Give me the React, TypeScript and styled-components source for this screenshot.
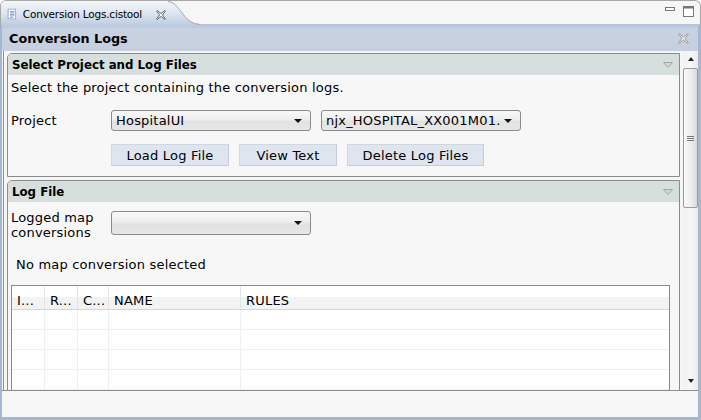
import styled, { createGlobalStyle } from 'styled-components';

const GlobalStyle = createGlobalStyle`
  html, body {
    margin: 0;
    padding: 0;
    background: #ffffff;
  }
  body {
    font-family: "DejaVu Sans", Verdana, sans-serif;
    font-size: 13px;
    letter-spacing: 0.2px;
    color: #000000;
  }
`;

const Window = styled.div`
  width: 701px;
  height: 420px;
  display: flex;
  flex-direction: column;
  overflow: hidden;
  background: #ffffff;
`;

// Editor tab strip
const TabBar = styled.div`
  height: 26px;
  flex: none;
  display: flex;
  align-items: stretch;
  box-sizing: border-box;
  border: 1px solid #a7a7a7;
  border-bottom: none;
  border-radius: 6px 6px 0 0;
  background: #f6f6f6;
  overflow: hidden;
  box-shadow: inset 0 -2px 0 #b5c5da;
`;

const Tab = styled.div`
  width: 165px;
  display: flex;
  align-items: center;
  gap: 6px;
  padding-left: 6px;
  box-sizing: border-box;
  background: linear-gradient(to bottom, #f3f6fa 0%, #dfe7f1 45%, #bccbdf 100%);
`;

const TabLabel = styled.span`
  font-size: 10.5px;
  letter-spacing: -0.2px;
  color: #000;
  white-space: nowrap;
  padding-top: 1px;
`;

const TabClose = styled.span`
  display: flex;
  margin-left: 8px;
  padding-top: 2px;
`;

const TabCurve = styled.svg`
  flex: none;
  display: block;
`;

const ViewControls = styled.div`
  margin-left: auto;
  display: flex;
  align-items: flex-start;
  gap: 8px;
  padding: 5px 6px 0 0;
`;

// View frame below the tabs
const ViewFrame = styled.div`
  flex: 1;
  display: flex;
  flex-direction: column;
  border: 3px solid #a4b7cf;
  border-top: none;
  border-left-width: 2px;
  min-height: 0;
`;

const ViewHeader = styled.div`
  height: 25px;
  flex: none;
  display: flex;
  align-items: center;
  justify-content: space-between;
  box-sizing: border-box;
  padding: 0 9px 0 7px;
  background: linear-gradient(to bottom, #b9c8dc 0, #c9d2e1 3px, #c6cfdf 100%);
  font-size: 12.8px;
  letter-spacing: 0;
  font-weight: bold;
`;

const Body = styled.div`
  height: 340px;
  flex: none;
  display: flex;
  border-bottom: 1px solid #8e8e8e;
  box-sizing: border-box;
  background: #f6f6f6;
`;

const ScrollArea = styled.div`
  flex: 1;
  margin-left: 1px;
  border-left: 1px solid #8e8e8e;
  overflow: hidden;
  padding: 2px 3px 0 3px;
  display: flex;
  flex-direction: column;
  gap: 3px;
`;

const Section = styled.div`
  border: 1px solid #8a8a8a;
  border-radius: 5px 0 0 0;
  background: #f7f7f7;
  flex: none;
`;

const SectionHeader = styled.div`
  height: 21px;
  display: flex;
  align-items: center;
  justify-content: space-between;
  padding: 0 6px 0 4px;
  background: #d7dfde;
  border-radius: 4px 0 0 0;
  font-weight: bold;
  font-size: 11.8px;
  letter-spacing: 0;
`;

const SectionBody = styled.div<{ $pad: string }>`
  padding: ${(p) => p.$pad};
  display: flex;
  flex-direction: column;
`;

const Description = styled.div`
  line-height: 14px;
  height: 14px;
  margin-bottom: 15px;
`;

const FieldRow = styled.div<{ $mb: number; $top?: boolean }>`
  display: grid;
  grid-template-columns: 100px auto;
  align-items: ${(p) => (p.$top ? 'start' : 'center')};
  margin-bottom: ${(p) => p.$mb}px;
`;

const FieldLabel = styled.div`
  line-height: 15px;
`;

const Controls = styled.div<{ $gap: number }>`
  display: flex;
  gap: ${(p) => p.$gap}px;
  align-items: center;
`;

const Combo = styled.div<{ $h: number }>`
  width: 200px;
  height: ${(p) => p.$h}px;
  box-sizing: border-box;
  border: 1px solid #8a8a8a;
  border-radius: 3px;
  background: linear-gradient(to bottom, #f8f8f8 0%, #eeeeee 45%, #e2e2e2 55%, #e6e6e6 100%);
  display: flex;
  align-items: center;
  padding: 0 8px 0 4px;
  gap: 4px;
`;

const ComboText = styled.span`
  flex: 1;
  overflow: hidden;
  white-space: nowrap;
`;

const ComboArrow = styled.span`
  width: 0;
  height: 0;
  border-left: 4px solid transparent;
  border-right: 4px solid transparent;
  border-top: 4px solid #111;
  flex: none;
`;

const Button = styled.div<{ $w: number }>`
  width: ${(p) => p.$w}px;
  height: 22px;
  box-sizing: border-box;
  display: flex;
  align-items: center;
  justify-content: center;
  background: #dee5ef;
  border: 1px solid #cfd7e1;
  border-right-color: #c4ccd6;
  border-bottom-color: #c4ccd6;
`;

const Status = styled.div`
  line-height: 14px;
  padding-left: 5px;
  margin: 18px 0 13px;
`;

// Table
const Table = styled.div`
  border: 1px solid #8a8a8a;
  background: #ffffff;
  height: 140px;
  margin-right: 6px;
`;

const Row = styled.div<{ $header?: boolean }>`
  display: grid;
  grid-template-columns: 33px 33px 31px 132px 1fr;
  height: ${(p) => (p.$header ? 24 : 20)}px;
  box-sizing: border-box;
  border-bottom: 1px solid ${(p) => (p.$header ? '#d5d5d5' : '#f0f0f0')};
  background: ${(p) =>
    p.$header ? 'linear-gradient(to bottom, #ffffff 0, #ffffff 11px, #f3f3f3 11px)' : '#ffffff'};
`;

const Cell = styled.div<{ $header?: boolean }>`
  border-right: 1px solid ${(p) => (p.$header ? '#e4e4e4' : '#edf0f5')};
  padding: 7px 0 0 5px;
  white-space: nowrap;
  overflow: hidden;
  &:last-child {
    border-right: none;
  }
`;

// Vertical scrollbar
const ScrollBar = styled.div`
  width: 15px;
  flex: none;
  display: flex;
  flex-direction: column;
  align-items: center;
  background: linear-gradient(to right, #f1f1f1, #f7f7f7 50%, #ececec);
`;

const Arrow = styled.span<{ $up?: boolean }>`
  width: 0;
  height: 0;
  border-left: 3px solid transparent;
  border-right: 3px solid transparent;
  ${(p) => (p.$up ? 'border-bottom: 4px solid #222;' : 'border-top: 4px solid #222;')}
  margin: ${(p) => (p.$up ? '6px 0 7px' : 'auto 0 7px')};
`;

const Thumb = styled.div`
  width: 15px;
  height: 140px;
  box-sizing: border-box;
  border: 1px solid #9c9c9c;
  border-radius: 2px;
  background: linear-gradient(to right, #fbfbfb, #ebebeb 60%, #d9d9d9);
  display: flex;
  align-items: center;
  justify-content: center;
`;

const Grip = styled.span`
  width: 7px;
  height: 5px;
  background: repeating-linear-gradient(to bottom, #777 0, #777 1px, transparent 1px, transparent 2px);
`;

const StatusBar = styled.div`
  flex: 1;
  background: #f6f6f6;
`;

const DocIcon = () => (
  <svg width="13" height="14" viewBox="0 0 13 14">
    <rect x="1.5" y="0.5" width="10" height="13" fill="#fff" stroke="#8aa2c6" />
    <path d="M4 3.5h6M4 5.5h6M4 7.5h6M4 9.5h6M4 11.5h4" stroke="#5d80b8" />
    <rect x="0" y="3" width="2" height="1" fill="#e2a63a" />
    <rect x="0" y="7" width="2" height="1" fill="#e2a63a" />
    <rect x="0" y="11" width="2" height="1" fill="#e2a63a" />
  </svg>
);

const CloseX = ({ size, stroke, fill }: { size: number; stroke: string; fill: string }) => (
  <svg width={size} height={size} viewBox="0 0 10 10">
    <polygon
      points="1,0.5 5,3.6 9,0.5 9.5,1 6.4,5 9.5,9 9,9.5 5,6.4 1,9.5 0.5,9 3.6,5 0.5,1"
      fill={fill}
      stroke={stroke}
      strokeWidth="0.9"
      strokeLinejoin="round"
    />
  </svg>
);

const Collapse = () => (
  <svg width="10" height="6" viewBox="0 0 10 6">
    <polygon points="0.5,0.5 9.5,0.5 5,5.5" fill="#d2d6d6" stroke="#9a9a9a" strokeWidth="0.8" />
  </svg>
);

const App = () => {
  const rows = [0, 1, 2, 3, 4];
  return (
    <>
      <GlobalStyle />
      <Window>
        <TabBar>
          <Tab>
            <DocIcon />
            <TabLabel>Conversion Logs.cistool</TabLabel>
            <TabClose>
              <CloseX size={10} stroke="#5a5a5a" fill="#ffffff" />
            </TabClose>
          </Tab>
          <TabCurve width="34" height="25" viewBox="0 0 34 25">
            <defs>
              <linearGradient id="tabg" x1="0" y1="0" x2="0" y2="1">
                <stop offset="0" stopColor="#f3f6fa" />
                <stop offset="0.45" stopColor="#dfe7f1" />
                <stop offset="1" stopColor="#bccbdf" />
              </linearGradient>
            </defs>
            <path d="M0 0 L2 0 C14 0 17 23 34 23 L34 25 L0 25 Z" fill="url(#tabg)" />
            <path d="M2 0.5 C14 0.5 17 23.5 34 23.5" fill="none" stroke="#a7a7a7" />
          </TabCurve>
          <ViewControls>
            <svg width="10" height="5" viewBox="0 0 10 5" style={{ marginTop: 1 }}>
              <rect x="0.5" y="0.5" width="9" height="3" fill="#fff" stroke="#777" />
            </svg>
            <svg width="11" height="11" viewBox="0 0 11 11">
              <rect x="0.5" y="0.5" width="10" height="10" fill="#fff" stroke="#777" />
              <rect x="0.5" y="0.5" width="10" height="2" fill="#777" />
            </svg>
          </ViewControls>
        </TabBar>

        <ViewFrame>
          <ViewHeader>
            <span>Conversion Logs</span>
            <CloseX size={11} stroke="#9a9a9a" fill="#eef0f3" />
          </ViewHeader>

          <Body>
            <ScrollArea>
              <Section>
                <SectionHeader>
                  <span>Select Project and Log Files</span>
                  <Collapse />
                </SectionHeader>
                <SectionBody $pad="6px 3px 10px 3px">
                  <Description>Select the project containing the conversion logs.</Description>
                  <FieldRow $mb={13}>
                    <FieldLabel>Project</FieldLabel>
                    <Controls $gap={10}>
                      <Combo $h={21}>
                        <ComboText>HospitalUI</ComboText>
                        <ComboArrow />
                      </Combo>
                      <Combo $h={21}>
                        <ComboText>njx_HOSPITAL_XX001M01.</ComboText>
                        <ComboArrow />
                      </Combo>
                    </Controls>
                  </FieldRow>
                  <FieldRow $mb={0}>
                    <span />
                    <Controls $gap={10}>
                      <Button $w={118}>Load Log File</Button>
                      <Button $w={98}>View Text</Button>
                      <Button $w={137}>Delete Log Files</Button>
                    </Controls>
                  </FieldRow>
                </SectionBody>
              </Section>

              <Section>
                <SectionHeader>
                  <span>Log File</span>
                  <Collapse />
                </SectionHeader>
                <SectionBody $pad="8px 3px 0 3px">
                  <FieldRow $mb={0} $top>
                    <FieldLabel>
                      Logged map
                      <br />
                      conversions
                    </FieldLabel>
                    <Combo $h={24} style={{ marginTop: 1 }}>
                      <ComboText />
                      <ComboArrow />
                    </Combo>
                  </FieldRow>
                  <Status>No map conversion selected</Status>
                  <Table>
                    <Row $header>
                      <Cell $header>I...</Cell>
                      <Cell $header>R...</Cell>
                      <Cell $header>C...</Cell>
                      <Cell $header>NAME</Cell>
                      <Cell $header>RULES</Cell>
                    </Row>
                    {rows.map((r) => (
                      <Row key={r}>
                        <Cell />
                        <Cell />
                        <Cell />
                        <Cell />
                        <Cell />
                      </Row>
                    ))}
                  </Table>
                </SectionBody>
              </Section>
            </ScrollArea>

            <ScrollBar>
              <Arrow $up />
              <Thumb>
                <Grip />
              </Thumb>
              <Arrow />
            </ScrollBar>
          </Body>

          <StatusBar />
        </ViewFrame>
      </Window>
    </>
  );
};

export default App;
